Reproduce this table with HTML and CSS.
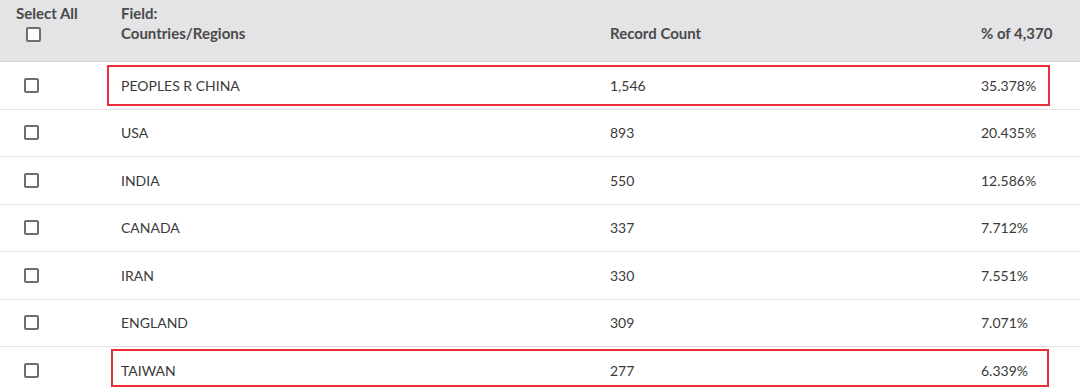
FILE: index.html
```html
<!DOCTYPE html>
<html>
<head>
<meta charset="utf-8">
<link rel="stylesheet" href="styles.css">
</head>
<body>
<div class="table">
  <div class="head">
    <div class="hcell sel">
      <span class="sel-label">Select All</span>
      <span class="box"></span>
    </div>
    <div class="hcell field">
      <span>Field:</span>
      <span>Countries/Regions</span>
    </div>
    <div class="hcell low">Record Count</div>
    <div class="hcell low">% of 4,370</div>
  </div>
  <div class="row"><div class="chk"><span class="box"></span></div><div>PEOPLES R CHINA</div><div>1,546</div><div>35.378%</div></div>
  <div class="row"><div class="chk"><span class="box"></span></div><div>USA</div><div>893</div><div>20.435%</div></div>
  <div class="row"><div class="chk"><span class="box"></span></div><div>INDIA</div><div>550</div><div>12.586%</div></div>
  <div class="row"><div class="chk"><span class="box"></span></div><div>CANADA</div><div>337</div><div>7.712%</div></div>
  <div class="row"><div class="chk"><span class="box"></span></div><div>IRAN</div><div>330</div><div>7.551%</div></div>
  <div class="row"><div class="chk"><span class="box"></span></div><div>ENGLAND</div><div>309</div><div>7.071%</div></div>
  <div class="row"><div class="chk"><span class="box"></span></div><div>TAIWAN</div><div>277</div><div>6.339%</div></div>
  <div class="mark mark-1"></div>
  <div class="mark mark-2"></div>
</div>
</body>
</html>
```
FILE: styles.css
```css
html, body {
  margin: 0;
  padding: 0;
  background: #ffffff;
}
body {
  font-family: "Source Sans Pro", Lato, "Open Sans", sans-serif;
  font-size: 14px;
  color: #3a3a3a;
  width: 1080px;
  height: 392px;
  overflow: hidden;
}
.table {
  position: relative;
}
.head,
.row {
  display: grid;
  grid-template-columns: 121px 489px 371px 1fr;
}
.head {
  height: 61px;
  background: #e4e4e6;
  border-bottom: 1px solid #d6d6d8;
  font-weight: 700;
  font-size: 15px;
  color: #4a4a4a;
}
.hcell {
  line-height: 20px;
}
.sel {
  display: flex;
  flex-direction: column;
  align-items: flex-start;
  padding-left: 16px;
  padding-top: 3px;
}
.sel .box {
  margin-left: 10px;
  margin-top: 4px;
}
.field {
  display: flex;
  flex-direction: column;
  padding-top: 3px;
}
.low {
  padding-top: 23px;
}
.row {
  height: 46.5px;
  align-items: center;
  border-bottom: 1px solid #e3e3e3;
}
.chk {
  padding-left: 24px;
  display: flex;
  align-items: center;
}
.box {
  display: block;
  width: 11px;
  height: 11px;
  border: 2px solid #6e6e6e;
  border-radius: 2px;
  background: #fff;
}
.mark {
  position: absolute;
  border: 2px solid #ea2f38;
  box-sizing: border-box;
}
.mark-1 {
  left: 107px;
  top: 65px;
  width: 943px;
  height: 41px;
}
.mark-2 {
  left: 111px;
  top: 349px;
  width: 938px;
  height: 38px;
}
```
